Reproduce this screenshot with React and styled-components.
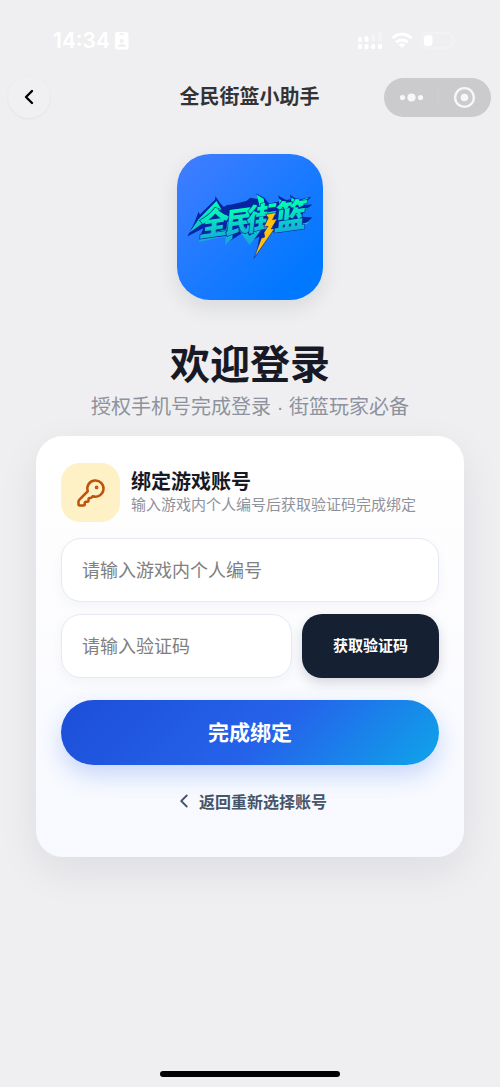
import React, { useState } from 'react'
import styled, { createGlobalStyle } from 'styled-components'
import { ChevronLeft, KeyRound } from 'lucide-react'

const StatusIcons = () => (
  <svg width="98" height="18" viewBox="0 0 98 18" fill="#fff" aria-hidden="true">
    <rect x="0" y="5" width="4" height="5" rx="1.6" />
    <rect x="6.5" y="4" width="4" height="6" rx="1.6" />
    <rect x="13.2" y="2.5" width="4" height="7.5" rx="1.6" opacity="0.3" />
    <rect x="20" y="0" width="4" height="10" rx="1.6" opacity="0.3" />
    <rect x="0" y="12" width="4" height="5" rx="1.6" />
    <rect x="6.5" y="12" width="4" height="5" rx="1.6" />
    <rect x="13.2" y="12" width="4" height="5" rx="1.6" />
    <rect x="20" y="12" width="4" height="5" rx="1.6" />
    <g fill="none" stroke="#fff" strokeWidth="3">
      <path d="M34.6 6.3a13.2 13.2 0 0 1 18.8 0" />
      <path d="M38.2 10.3a8.2 8.2 0 0 1 11.6 0" />
    </g>
    <path d="M44 16l-3.4-3.4a4.8 4.8 0 0 1 6.8 0z" />
    <rect
      x="64"
      y="1"
      width="30.5"
      height="15"
      rx="5"
      fill="none"
      stroke="#fff"
      opacity="0.4"
    />
    <path d="M96 6.5c2 .6 2 3.6 0 4.2z" opacity="0.4" />
    <rect x="66" y="3" width="8.5" height="11" rx="3.2" />
  </svg>
)

const BadgeIcon = () => (
  <svg width="14" height="18" viewBox="0 0 14 18" aria-hidden="true">
    <rect width="13.5" height="17.5" rx="2.6" fill="#fff" />
    <rect x="4.2" y="1.6" width="5" height="1.4" rx="0.7" fill="#efeff1" />
    <circle cx="6.8" cy="9" r="2.1" fill="#efeff1" />
    <path d="M2.5 15c.4-4 8.2-4 8.6 0z" fill="#efeff1" />
  </svg>
)

const CapsuleIcons = () => (
  <svg width="107" height="39" viewBox="0 0 107 39" fill="#f7f7f8" aria-hidden="true">
    <circle cx="18.5" cy="19.5" r="2.6" />
    <circle cx="27.5" cy="19.5" r="4.1" />
    <circle cx="36.5" cy="19.5" r="2.6" />
    <path d="M54 10v19" stroke="#cececf" strokeWidth="1" />
    <circle cx="80.5" cy="19.5" r="9.4" fill="none" stroke="#f7f7f8" strokeWidth="2.4" />
    <circle cx="80.5" cy="19.5" r="3.8" />
  </svg>
)

const GameLogo = () => (
  <svg viewBox="35 27 440 440" role="img" aria-label="全民街篮">
    <defs>
      <linearGradient id="mint" x1="0" y1="0" x2="0" y2="1">
        <stop offset="0.25" stopColor="#00ffb0" />
        <stop offset="0.9" stopColor="#14acd8" />
      </linearGradient>
      <linearGradient id="mintEdge" gradientUnits="userSpaceOnUse" x1="0" y1="170" x2="0" y2="300">
        <stop offset="0" stopColor="#00ffb0" />
        <stop offset="1" stopColor="#14a5dc" />
      </linearGradient>
    </defs>
    <path
      fill="#0625a2"
      d="M66 276l20-39 14-36 4 8 45-43 2-12 13 20 12 13 10-6 14-2 44-10 12-10 34 6-18-20 26 14 14 17 20-3 14-4-7-17 25 14 14-3-2-13 22 16 42-10-24 25 27-2-26 21-6 16 32 2-22 20-85 25-17-4-44 67 8-50-23 12-17-30-56 36 2-26-85 11 10-28z"
    />
    <g fill="url(#mintEdge)">
      <path d="M72 264l28-40 54-55 14 24-46 36z" />
      <path d="M100 292l14-24 72-14-4 20z" />
      <path d="M180 302l6-70 18-4-2 54z" />
      <path d="M222 256l20-8 12 26 22-28 24-6-46 62z" />
      <path d="M276 150l20 12 6 28-18-4z" />
      <path d="M344 163l17 12-10 24-10-2z" />
      <path d="M380 158l18 12-10 22-10-4z" />
      <path d="M394 172l38-14-28 26z" />
      <path d="M398 198l34-10-34 20z" />
      <path d="M326 268l10-14 98-22-20 14z" />
    </g>
    <g
      transform="rotate(-8 250 220)"
      fontFamily="'Noto Sans CJK SC', sans-serif"
      fontStyle="italic"
      fontWeight="900"
      fill="url(#mint)"
      stroke="#0625a2"
      strokeWidth="4"
      paintOrder="stroke"
    >
      <text x="92" y="255" fontSize="92">全</text>
      <text x="172" y="257" fontSize="84">民</text>
      <text x="236" y="259" fontSize="90">街</text>
      <text x="320" y="268" fontSize="98">篮</text>
    </g>
    <path
      fill="#ffc20c"
      stroke="#0625a2"
      strokeWidth="2"
      d="M302 209l32-6-11 22 14-3-18 31 10-1-62 89 22-60 10-4-2-13 12-19-12 2 13-28z"
    />
  </svg>
)

export default function App() {
  const [playerId, setPlayerId] = useState('')
  const [code, setCode] = useState('')

  return (
    <>
      <GlobalStyle />
      <Page>
        <StatusBar>
          <Clock>
            14:34
            <BadgeIcon />
          </Clock>
          <StatusIcons />
        </StatusBar>
        <NavBar>
          <RoundButton type="button" aria-label="返回">
            <ChevronLeft size={24} strokeWidth={2.4} />
          </RoundButton>
          <NavTitle>全民街篮小助手</NavTitle>
          <Capsule type="button" aria-label="菜单">
            <CapsuleIcons />
          </Capsule>
        </NavBar>

        <Hero>
          <LogoTile>
            <GameLogo />
          </LogoTile>
          <Welcome>欢迎登录</Welcome>
          <Tagline>授权手机号完成登录 · 街篮玩家必备</Tagline>
        </Hero>

        <Card onSubmit={(e) => e.preventDefault()}>
          <CardHeader>
            <KeyTile>
              <KeyRound size={30} strokeWidth={2} />
            </KeyTile>
            <div>
              <CardTitle>绑定游戏账号</CardTitle>
              <CardHint>输入游戏内个人编号后获取验证码完成绑定</CardHint>
            </div>
          </CardHeader>
          <Field
            aria-label="游戏内个人编号"
            placeholder="请输入游戏内个人编号"
            value={playerId}
            onChange={(e) => setPlayerId(e.target.value)}
          />
          <CodeRow>
            <Field
              aria-label="验证码"
              placeholder="请输入验证码"
              value={code}
              onChange={(e) => setCode(e.target.value)}
            />
            <CodeButton type="button">获取验证码</CodeButton>
          </CodeRow>
          <SubmitButton type="submit">完成绑定</SubmitButton>
          <BackButton type="button">
            <ChevronLeft size={22} strokeWidth={2} />
            返回重新选择账号
          </BackButton>
        </Card>

        <HomeIndicator />
      </Page>
    </>
  )
}

const GlobalStyle = createGlobalStyle`
  * {
    box-sizing: border-box;
  }
  body {
    margin: 0;
    background: #efeff1;
    font-family: 'Noto Sans CJK SC', sans-serif;
  }
  h1, h2, p {
    margin: 0;
  }
  button, input {
    font-family: inherit;
  }
  button {
    border: none;
    padding: 0;
    cursor: pointer;
  }
`

const Page = styled.main`
  display: flex;
  flex-direction: column;
  min-height: 100vh;
  padding-bottom: 10px;
`

const StatusBar = styled.div`
  display: flex;
  align-items: center;
  justify-content: space-between;
  height: 76px;
  padding: 6px 44px 0 53px;
`

const Clock = styled.div`
  display: flex;
  align-items: center;
  gap: 5px;
  color: #fff;
  font: 600 21px/26px Inter, sans-serif;
`

const NavBar = styled.header`
  display: grid;
  grid-template-columns: 1fr auto 1fr;
  align-items: center;
  height: 42px;
  padding: 0 9px 0 8px;
`

const RoundButton = styled.button`
  display: flex;
  align-items: center;
  justify-content: center;
  width: 42px;
  height: 42px;
  border-radius: 50%;
  background: #f0f0f2;
  color: #000;
  box-shadow: 0 1px 3px rgba(0, 0, 0, 0.05);
`

const NavTitle = styled.div`
  padding-bottom: 2px;
  color: #333336;
  font-size: 20px;
  line-height: 28px;
  font-weight: 700;
`

const Capsule = styled.button`
  display: flex;
  justify-self: end;
  border-radius: 20px;
  background: #cbcbcd;
`

const Hero = styled.section`
  display: flex;
  flex-direction: column;
  align-items: center;
  padding-top: 36px;
`

const LogoTile = styled.div`
  width: 146px;
  height: 146px;
  border-radius: 33px;
  background: linear-gradient(135deg, #427dff 0%, #0078ff 85%);
  box-shadow: 0 8px 20px rgba(30, 40, 60, 0.1);

  svg {
    display: block;
    width: 100%;
    height: 100%;
  }
`

const Welcome = styled.h1`
  margin-top: 36px;
  color: #171a25;
  font-size: 40px;
  line-height: 52px;
  font-weight: 700;
`

const Tagline = styled.p`
  margin-top: 5px;
  color: #8e929d;
  font-family: 'Liberation Sans', 'Noto Sans CJK SC', sans-serif;
  font-size: 20px;
  line-height: 28px;
`

const Card = styled.form`
  display: flex;
  flex-direction: column;
  margin: 15px 36px 0;
  padding: 27px 25px 44px;
  border-radius: 27px;
  background: linear-gradient(180deg, #fff 0%, #fdfdfe 30%, #f7f9fe 100%);
  box-shadow: 0 14px 40px rgba(30, 30, 60, 0.08);
`

const CardHeader = styled.div`
  display: flex;
  align-items: center;
  gap: 11px;
  margin-bottom: 16px;
`

const KeyTile = styled.div`
  display: flex;
  flex-shrink: 0;
  align-items: center;
  justify-content: center;
  width: 59px;
  height: 59px;
  border-radius: 19px;
  background: #fef1c6;
  color: #bd530b;
`

const CardTitle = styled.h2`
  color: #171a25;
  font-size: 20px;
  line-height: 24px;
  font-weight: 700;
`

const CardHint = styled.p`
  padding-bottom: 2px;
  color: #8e929d;
  font-size: 15px;
  line-height: 22px;
`

const Field = styled.input`
  width: 100%;
  min-width: 0;
  height: 64px;
  padding: 0 20px 2px;
  border: 1px solid #e4e9f2;
  border-radius: 20px;
  outline: none;
  background: #fff;
  color: #171a25;
  font-size: 18px;
  box-shadow: 0 4px 12px rgba(30, 40, 80, 0.04);

  &::placeholder {
    color: #808080;
    opacity: 1;
  }
`

const CodeRow = styled.div`
  display: grid;
  grid-template-columns: 1fr 137px;
  gap: 10px;
  margin: 12px 0 22px;
`

const CodeButton = styled.button`
  padding-bottom: 4px;
  border-radius: 20px;
  background: #162033;
  color: #fff;
  font-size: 15px;
  font-weight: 700;
  box-shadow: 0 5px 12px rgba(22, 32, 51, 0.16);
`

const SubmitButton = styled.button`
  height: 65px;
  padding-bottom: 4px;
  border-radius: 33px;
  background: linear-gradient(135deg, #1d4ed8 0%, #2563eb 55%, #0ea5e9 100%);
  color: #fff;
  font-size: 21px;
  font-weight: 700;
  box-shadow: 0 10px 24px rgba(37, 99, 235, 0.24);
`

const BackButton = styled.button`
  display: flex;
  align-items: center;
  align-self: center;
  gap: 4px;
  margin-top: 24px;
  background: none;
  color: #475569;
  font-size: 16px;
  line-height: 24px;
  font-weight: 700;
`

const HomeIndicator = styled.div`
  align-self: center;
  width: 36%;
  height: 6px;
  margin-top: auto;
  border-radius: 3px;
  background: #000;
`
